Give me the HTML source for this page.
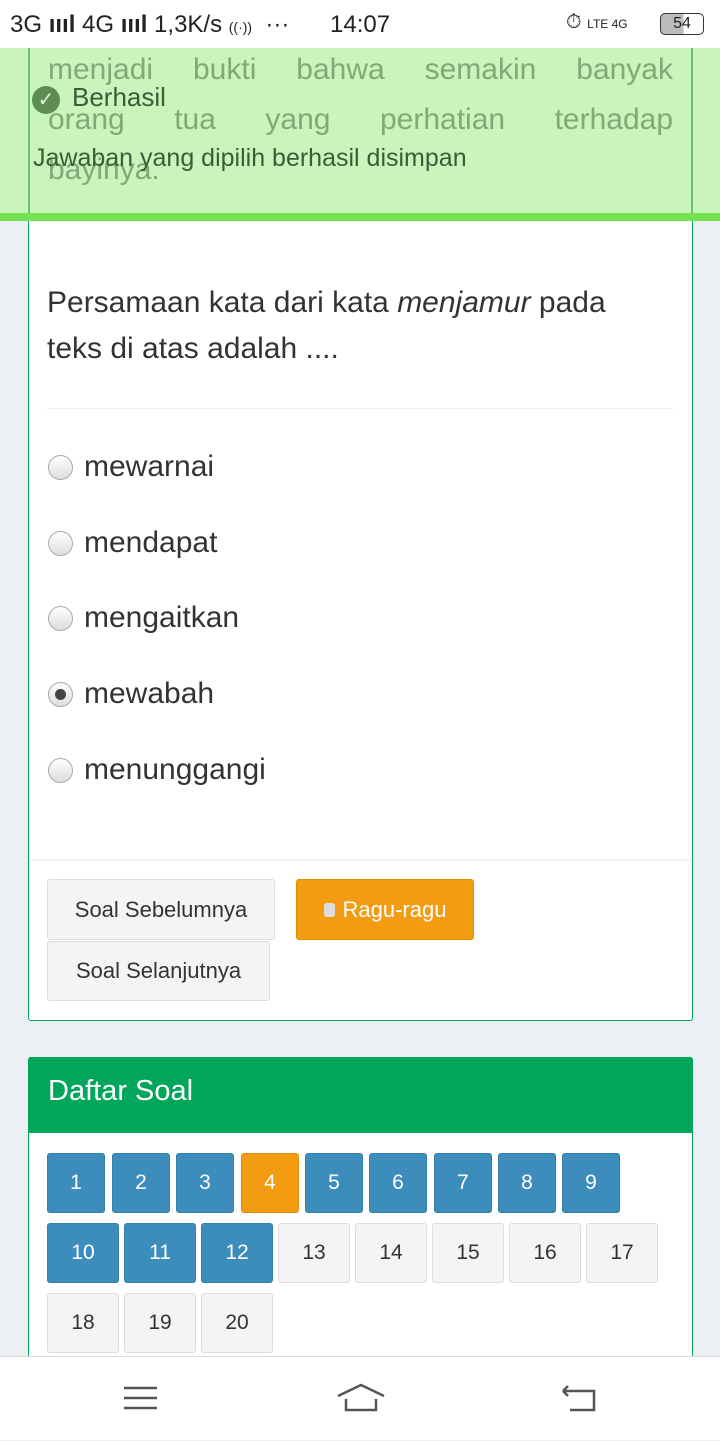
<!DOCTYPE html>
<html><head><meta charset="utf-8"><style>
*{box-sizing:border-box;margin:0;padding:0}
body{width:720px;height:1440px;overflow:hidden;background:#ecf0f5;font-family:"Liberation Sans",sans-serif;position:relative;color:#333}
.abs{position:absolute}
.card{left:28px;top:0;width:665px;height:1021px;background:#fff;border:1.5px solid #00a65a;border-radius:3px}
.q{left:47px;top:280px;font-size:30px;line-height:46px;color:#333;width:640px}
.opt{left:48px;font-size:30px;color:#333;display:flex;align-items:center}
.rad{width:25px;height:25px;border-radius:50%;border:1px solid #aaa;background:linear-gradient(#fff,#ddd);margin-right:11px;position:relative}
.btn{border:1.5px solid #ddd;background:#f4f4f4;border-radius:3px;font-size:22px;color:#333;display:flex;align-items:center;justify-content:center}
.n{position:absolute;border-radius:3px;font-size:21px;display:flex;align-items:center;justify-content:center}
.b{background:#3c8dbc;border:1px solid #367fa9;color:#fff}
.o{background:#f39c12;border:1px solid #e08e0b;color:#fff}
.g{background:#f4f4f4;border:1.5px solid #ddd;color:#333}
</style></head><body>
<div class="abs card"></div>
<div class="abs" style="left:0;top:48px;width:720px;height:165px;background:#c9f4bb"></div>
<div class="abs" style="left:28px;top:48px;width:1.5px;height:165px;background:#6cc070"></div>
<div class="abs" style="left:691px;top:48px;width:1.5px;height:165px;background:#6cc070"></div>
<div class="abs" style="left:48px;top:45px;width:625px;font-size:30px;line-height:50px;color:#82a878;text-align:justify;text-align-last:justify">menjadi bukti bahwa semakin banyak<br>orang tua yang perhatian terhadap</div>
<div class="abs" style="left:48px;top:145px;font-size:30px;line-height:50px;color:#82a878">bayinya.</div>
<div class="abs" style="left:0;top:213px;width:720px;height:8px;background:#76e253"></div>
<div class="abs" style="left:32px;top:86px;width:28px;height:28px;border-radius:50%;background:#5e8c55;color:#dff5d7;font-size:20px;text-align:center;line-height:28px">✓</div>
<div class="abs" style="left:72px;top:82px;font-size:26px;color:#3c5c38">Berhasil</div>
<div class="abs" style="left:33px;top:144px;font-size:25px;color:#3c5c38">Jawaban yang dipilih berhasil disimpan</div>
<div class="abs" style="left:0;top:0;width:720px;height:48px;background:#fff;font-size:24px;color:#222">
<span class="abs" style="left:10px;top:11px">3G <b>ıııl</b> 4G <b>ıııl</b> 1,3K/s <small style="font-size:14px">((·))</small> &nbsp;···</span>
<span class="abs" style="left:330px;top:11px">14:07</span>
<span class="abs" style="left:566px;top:11px;font-size:20px">⏱ <small style="font-size:12px">LTE 4G</small></span>
<span class="abs" style="left:660px;top:13px;width:44px;height:22px;border:1.5px solid #333;border-radius:5px;font-size:16px;text-align:center;line-height:19px;background:linear-gradient(90deg,#bbb 54%,#fff 54%)">54</span>
</div>
<div class="abs q">Persamaan kata dari kata <i>menjamur</i> pada<br>teks di atas adalah ....</div>
<div class="abs" style="left:47px;top:408px;width:626px;height:1px;background:#eee"></div>
<div class="abs opt" style="top:450px"><span class="rad"></span>mewarnai</div>
<div class="abs opt" style="top:526px"><span class="rad"></span>mendapat</div>
<div class="abs opt" style="top:601px"><span class="rad"></span>mengaitkan</div>
<div class="abs opt" style="top:677px"><span class="rad"><span class="abs" style="left:6px;top:6px;width:11px;height:11px;border-radius:50%;background:#444"></span></span>mewabah</div>
<div class="abs opt" style="top:753px"><span class="rad"></span>menunggangi</div>
<div class="abs" style="left:30px;top:859px;width:661px;height:2px;background:#f4f4f4"></div>
<div class="abs btn" style="left:47px;top:879px;width:228px;height:61px">Soal Sebelumnya</div>
<div class="abs btn" style="left:296px;top:879px;width:178px;height:61px;background:#f39c12;border-color:#e08e0b;color:#fff"><span style="width:11px;height:14px;background:#ddd;border-radius:3px;margin-right:8px;display:inline-block"></span>Ragu-ragu</div>
<div class="abs btn" style="left:47px;top:941px;width:223px;height:60px">Soal Selanjutnya</div>
<div class="abs" style="left:28px;top:1057px;width:665px;height:320px;background:#fff;border:1.5px solid #00a65a;border-radius:3px"></div>
<div class="abs" style="left:28px;top:1057px;width:665px;height:76px;background:#00a65a;border-radius:3px 3px 0 0;color:#fff;font-size:29px;padding:18px 0 0 20px">Daftar Soal</div>
<div class="n b" style="left:47px;top:1153px;width:58px;height:60px">1</div>
<div class="n b" style="left:112px;top:1153px;width:58px;height:60px">2</div>
<div class="n b" style="left:176px;top:1153px;width:58px;height:60px">3</div>
<div class="n o" style="left:241px;top:1153px;width:58px;height:60px">4</div>
<div class="n b" style="left:305px;top:1153px;width:58px;height:60px">5</div>
<div class="n b" style="left:369px;top:1153px;width:58px;height:60px">6</div>
<div class="n b" style="left:434px;top:1153px;width:58px;height:60px">7</div>
<div class="n b" style="left:498px;top:1153px;width:58px;height:60px">8</div>
<div class="n b" style="left:562px;top:1153px;width:58px;height:60px">9</div>
<div class="n b" style="left:47px;top:1223px;width:72px;height:60px">10</div>
<div class="n b" style="left:124px;top:1223px;width:72px;height:60px">11</div>
<div class="n b" style="left:201px;top:1223px;width:72px;height:60px">12</div>
<div class="n g" style="left:278px;top:1223px;width:72px;height:60px">13</div>
<div class="n g" style="left:355px;top:1223px;width:72px;height:60px">14</div>
<div class="n g" style="left:432px;top:1223px;width:72px;height:60px">15</div>
<div class="n g" style="left:509px;top:1223px;width:72px;height:60px">16</div>
<div class="n g" style="left:586px;top:1223px;width:72px;height:60px">17</div>
<div class="n g" style="left:47px;top:1293px;width:72px;height:60px">18</div>
<div class="n g" style="left:124px;top:1293px;width:72px;height:60px">19</div>
<div class="n g" style="left:201px;top:1293px;width:72px;height:60px">20</div>
<div class="abs" style="left:0;top:1356px;width:720px;height:84px;background:#fff;border-top:1px solid #ddd">
<svg width="720" height="84" style="position:absolute;left:0;top:0" fill="none" stroke="#555" stroke-width="2.5">
<path d="M124 31H157M124 41H157M124 51H157"/>
<path d="M338 39L361 28L384 39M346 42V53H376V42"/>
<path d="M563 34H594V53H570M563 34L568 29M563 34L568 39"/>
</svg></div>
</body></html>
